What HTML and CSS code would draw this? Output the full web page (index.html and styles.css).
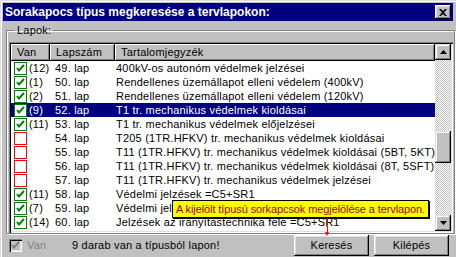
FILE: index.html
```html
<!DOCTYPE html>
<html lang="hu">
<head>
    <meta charset="UTF-8">
    <title>Sorakapocs típus megkeresése</title>
    <link rel="stylesheet" href="styles.css">
</head>
<body>
    <div class="window">
        <div class="titlebar">
            <span class="title">Sorakapocs típus megkeresése a tervlapokon:</span>
            <div class="close">
                <svg width="8" height="7" viewBox="0 0 8 7"><path d="M0 0h2l2 2 2-2h2L5 3.5 8 7H6L4 5 2 7H0l3-3.5z" fill="#000"/></svg>
            </div>
        </div>
        <fieldset class="group">
            <legend>Lapok:</legend>
            <div class="list">
                <div class="list-main">
                    <div class="header">
                        <div class="hcell">Van</div>
                        <div class="hcell">Lapszám</div>
                        <div class="hcell">Tartalomjegyzék</div>
                    </div>
                    <div class="row"><span class="cb on"></span><span>(12)</span><span>49. lap</span><span>400kV-os autonóm védelmek jelzései</span></div>
                    <div class="row"><span class="cb on"></span><span>(1)</span><span>50. lap</span><span>Rendellenes üzemállapot elleni védelem (400kV)</span></div>
                    <div class="row"><span class="cb on"></span><span>(2)</span><span>51. lap</span><span>Rendellenes üzemállapot elleni védelem (120kV)</span></div>
                    <div class="row selected"><span class="cb on"></span><span>(9)</span><span>52. lap</span><span>T1 tr. mechanikus védelmek kioldásai</span></div>
                    <div class="row"><span class="cb on"></span><span>(11)</span><span>53. lap</span><span>T1 tr. mechanikus védelmek előjelzései</span></div>
                    <div class="row"><span class="cb off"></span><span></span><span>54. lap</span><span>T205 (1TR.HFKV) tr. mechanikus védelmek kioldásai</span></div>
                    <div class="row"><span class="cb off"></span><span></span><span>55. lap</span><span>T11 (1TR.HFKV) tr. mechanikus védelmek kioldásai (5BT, 5KT)</span></div>
                    <div class="row"><span class="cb off"></span><span></span><span>56. lap</span><span>T11 (1TR.HFKV) tr. mechanikus védelmek kioldásai (8T, 5SFT)</span></div>
                    <div class="row"><span class="cb off"></span><span></span><span>57. lap</span><span>T11 (1TR.HFKV) tr. mechanikus védelmek jelzései</span></div>
                    <div class="row"><span class="cb on"></span><span>(11)</span><span>58. lap</span><span>Védelmi jelzések =C5+SR1</span></div>
                    <div class="row"><span class="cb on"></span><span>(7)</span><span>59. lap</span><span>Védelmi jelzések =C5+SR1</span></div>
                    <div class="row"><span class="cb on"></span><span>(14)</span><span>60. lap</span><span>Jelzések az irányítástechnika felé =C5+SR1</span></div>
                </div>
                <div class="scrollbar">
                    <div class="sbtn"><svg width="7" height="4" viewBox="0 0 7 4"><path d="M3.5 0L7 4H0z" fill="#000"/></svg></div>
                    <div class="track">
                        <div class="thumb"></div>
                    </div>
                    <div class="sbtn"><svg width="7" height="4" viewBox="0 0 7 4"><path d="M0 0h7L3.5 4z" fill="#000"/></svg></div>
                </div>
            </div>
        </fieldset>
        <div class="footer">
            <label class="van"><span class="cb disabled"></span>Van</label>
            <span class="message">9 darab van a típusból lapon!</span>
            <div class="buttons">
                <div class="btn">Keresés</div>
                <div class="btn">Kilépés</div>
            </div>
        </div>

        <div class="tooltip">A kijelölt típusú sorkapcsok megjelölése a tervlapon.</div>
        <div class="pointer"></div>
    </div>
</body>
</html>
```

FILE: styles.css
```css
body {
    margin: 0;
    background: #c0c0c0;
    font-family: "Liberation Sans", Arial, sans-serif;
    font-size: 11px;
    letter-spacing: 0.2px;
    color: #000;
}
.window {
    position: relative;
    width: 456px;
    height: 257px;
    box-sizing: border-box;
    padding: 3px 3px 0 3px;
    background: #c0c0c0;
    box-shadow: inset 1px 1px #dfdfdf, inset 2px 2px #fff;
}
.titlebar {
    height: 18px;
    background: #000080;
    color: #fff;
    display: flex;
    align-items: center;
    justify-content: space-between;
    padding: 0 2px 0 2px;
}
.title {
    font-weight: bold;
    font-size: 12px;
    letter-spacing: 0;
}
.close {
    width: 16px;
    height: 14px;
    box-sizing: border-box;
    background: #c0c0c0;
    display: flex;
    align-items: center;
    justify-content: center;
    box-shadow: inset -1px -1px #000, inset 1px 1px #fff, inset -2px -2px #808080, inset 2px 2px #dfdfdf;
}
.group {
    margin: 3px 3px 0 3px;
    padding: 5px 1px 0 2px;
    border: 1px solid #808080;
    box-shadow: inset 1px 1px #fff, 1px 1px #fff;
}
.group legend {
    margin-left: 6px;
    padding: 0 2px;
    line-height: 13px;
}
.list {
    display: flex;
    height: 191px;
    box-sizing: border-box;
    padding: 2px;
    background: #fff;
    box-shadow: inset 1px 1px #808080, inset 2px 2px #000, inset -1px -1px #fff, inset -2px -2px #dfdfdf;
}
.list-main {
    flex: 1;
    overflow: hidden;
}
.header {
    display: grid;
    grid-template-columns: 39px 65px 1fr;
    height: 17px;
}
.hcell {
    background: #c0c0c0;
    padding-left: 6px;
    line-height: 17px;
    box-shadow: inset -1px -1px #000, inset 1px 1px #fff, inset -2px -2px #808080;
}
.row {
    display: grid;
    grid-template-columns: 18px 26px 61px 1fr;
    height: 14px;
    line-height: 14px;
    white-space: nowrap;
}
.row.selected {
    background: #000080;
    color: #fff;
}
.cb {
    display: block;
    width: 13px;
    height: 13px;
    box-sizing: border-box;
    margin: 1px 0 0 3px;
    background: #fff;
}
.cb.on {
    border: 1px solid #008000;
    background: #fff url("data:image/svg+xml,%3Csvg xmlns='http://www.w3.org/2000/svg' width='11' height='11'%3E%3Cpath d='M2 5l2 2.5L9 2' stroke='%23008000' stroke-width='2' fill='none'/%3E%3C/svg%3E") no-repeat center;
}
.cb.off {
    border: 1px solid #ff0000;
}
.scrollbar {
    width: 16px;
    display: flex;
    flex-direction: column;
}
.sbtn {
    height: 16px;
    background: #c0c0c0;
    display: flex;
    align-items: center;
    justify-content: center;
    box-shadow: inset -1px -1px #000, inset 1px 1px #dfdfdf, inset -2px -2px #808080, inset 2px 2px #fff;
}
.track {
    flex: 1;
    padding-top: 71px;
    background: repeating-conic-gradient(#c0c0c0 0 25%, #fff 0 50%) 0 0 / 2px 2px;
}
.thumb {
    height: 32px;
    background: #c0c0c0;
    box-shadow: inset -1px -1px #000, inset 1px 1px #dfdfdf, inset -2px -2px #808080, inset 2px 2px #fff;
}
.footer {
    display: flex;
    align-items: center;
    height: 22px;
    padding: 0 4px 0 6px;
}
.van {
    display: flex;
    align-items: center;
    gap: 5px;
    width: 63px;
    color: #808080;
}
.cb.disabled {
    margin: 0;
    background: #c0c0c0 url("data:image/svg+xml,%3Csvg xmlns='http://www.w3.org/2000/svg' width='13' height='13'%3E%3Cpath d='M3 6l2 2.5L10 3' stroke='%23808080' stroke-width='2' fill='none'/%3E%3C/svg%3E") no-repeat center;
    box-shadow: inset 1px 1px #808080, inset 2px 2px #000, inset -1px -1px #fff, inset -2px -2px #dfdfdf;
}
.message {
    flex: 1;
}
.buttons {
    display: flex;
    gap: 5px;
}
.btn {
    width: 75px;
    height: 21px;
    line-height: 21px;
    text-align: center;
    box-shadow: inset -1px -1px #000, inset 1px 1px #fff, inset -2px -2px #808080, inset 2px 2px #dfdfdf;
}
.tooltip {
    position: absolute;
    left: 172px;
    top: 200px;
    padding: 1px 3px;
    background: #ffff00;
    color: #a00000;
    border: 1px solid #000;
    box-shadow: 1px 1px #000;
    line-height: 14px;
    letter-spacing: -0.1px;
    white-space: nowrap;
}
.pointer {
    position: absolute;
    left: 327px;
    top: 218px;
    width: 1px;
    height: 15px;
    background: #ff0000;
}
.pointer::after {
    content: "";
    position: absolute;
    left: -2px;
    bottom: -3px;
    border-left: 2.5px solid transparent;
    border-right: 2.5px solid transparent;
    border-top: 4px solid #ff0000;
}
```
